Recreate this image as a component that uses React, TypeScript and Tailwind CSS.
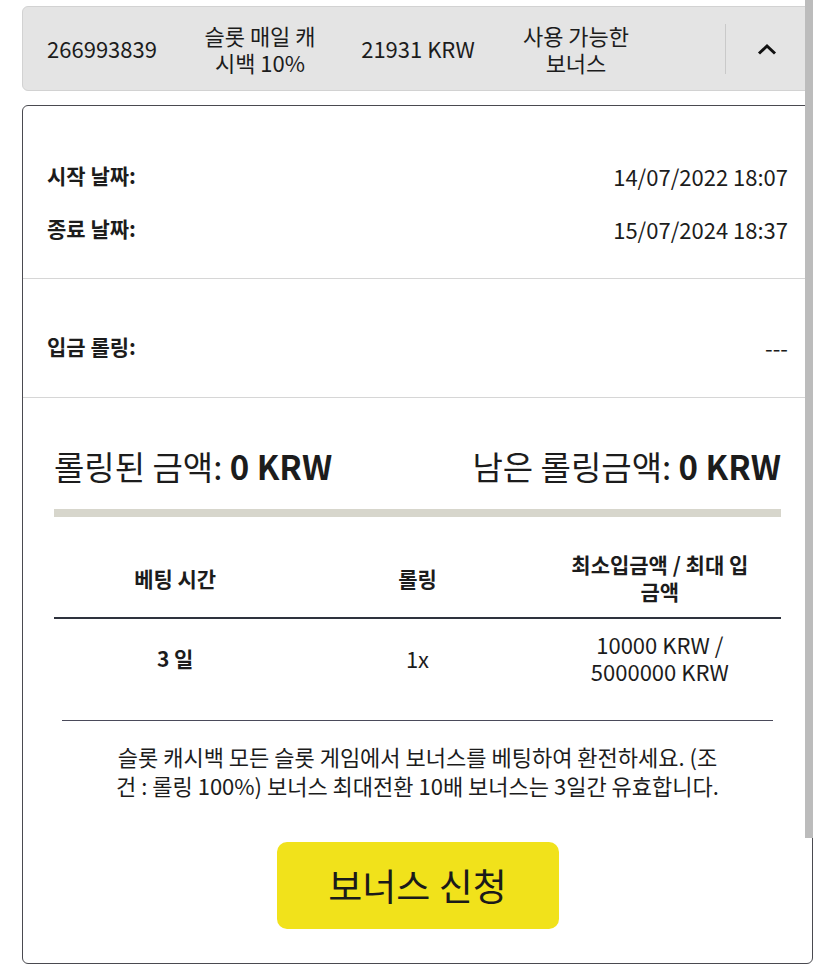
import React from "react";

const FONT = { fontFamily: '"Noto Sans CJK KR", "Noto Sans", sans-serif' };

function Chevron() {
  return (
    <svg width="20" height="12" viewBox="0 0 20 12" aria-hidden>
      <polyline points="2,10.5 10,3 18,10.5" fill="none" stroke="#111" strokeWidth="3" strokeLinejoin="miter" />
    </svg>
  );
}

function InfoRow({ label, value }: { label: string; value: string }) {
  return (
    <div className="flex h-[30px] items-center justify-between">
      <span className="text-[21px] font-bold">{label}</span>
      <span className="text-[22px]">{value}</span>
    </div>
  );
}

export default function App() {
  return (
    <div style={FONT} className="relative min-h-[969px] w-[835px] bg-white pt-[6px] text-[#1c1c1c]">
      {/* scrollbar thumb */}
      <div className="absolute right-[22px] top-0 h-[838px] w-[8px] bg-[#bcbcbc]" />

      <div className="mx-[22px] flex h-[85px] items-center rounded-[6px] border border-[#d2d2d2] bg-[#e4e4e4] text-[22px] leading-[27px]">
        <div className="w-[158px] text-center">266993839</div>
        <div className="w-[158px] text-center">
          슬롯 매일 캐<br />시백 10%
        </div>
        <div className="w-[158px] text-center">21931 KRW</div>
        <div className="w-[158px] text-center">
          사용 가능한<br />보너스
        </div>
        <div className="flex-1" />
        <div className="h-[50px] w-px bg-[#c9c9c9]" />
        <div className="flex w-[86px] items-center justify-center pr-1">
          <Chevron />
        </div>
      </div>

      <div className="mx-[22px] mt-[14px] overflow-hidden rounded-[6px] border-[1.5px] border-[#4a4a50] bg-white">
        <div className="flex flex-col gap-[23px] px-[24px] pb-[34px] pt-[55px]">
          <InfoRow label="시작 날짜:" value="14/07/2022 18:07" />
          <InfoRow label="종료 날짜:" value="15/07/2024 18:37" />
        </div>
        <div className="h-px bg-[#d6d6d6]" />
        <div className="px-[24px] pb-[35px] pt-[53px]">
          <InfoRow label="입금 롤링:" value="---" />
        </div>
        <div className="h-px bg-[#d6d6d6]" />

        <div className="px-[31px] pt-[48px]">
          <div className="flex h-[40px] items-center justify-between text-[33px] leading-[40px]">
            <span>
              롤링된 금액: <b className="font-bold">0 KRW</b>
            </span>
            <span>
              남은 롤링금액: <b className="font-bold">0 KRW</b>
            </span>
          </div>
          <div className="mt-[23px] h-[8px] bg-[#d7d6cc]" />

          <table className="mt-[22px] w-full table-fixed border-collapse text-[21px] leading-[27px]">
            <thead>
              <tr className="border-b-2 border-[#2e323d]">
                <th className="py-3 font-bold">베팅 시간</th>
                <th className="py-3 font-bold">롤링</th>
                <th className="py-3 font-bold">
                  최소입금액 / 최대 입<br />금액
                </th>
              </tr>
            </thead>
            <tbody>
              <tr>
                <td className="py-3 text-center font-bold">3 일</td>
                <td className="py-3 text-center text-[22px]">1x</td>
                <td className="py-3 text-center text-[22px]">
                  10000 KRW /<br />5000000 KRW
                </td>
              </tr>
            </tbody>
          </table>

          <div className="mx-[8px] mt-[23px] h-px bg-[#4a4a5a]" />

          <p className="mt-[21px] text-center text-[22px] leading-[29px]">
            슬롯 캐시백 모든 슬롯 게임에서 보너스를 베팅하여 환전하세요. (조<br />건 : 롤링 100%) 보너스 최대전환 10배 보너스는 3일간 유효합니다.
          </p>

          <div className="flex justify-center pb-[34px] pt-[42px]">
            <button className="h-[87px] w-[282px] rounded-[10px] bg-[#f1e21b] text-[37px] text-[#1a1a1a]">
              보너스 신청
            </button>
          </div>
        </div>
      </div>
    </div>
  );
}
